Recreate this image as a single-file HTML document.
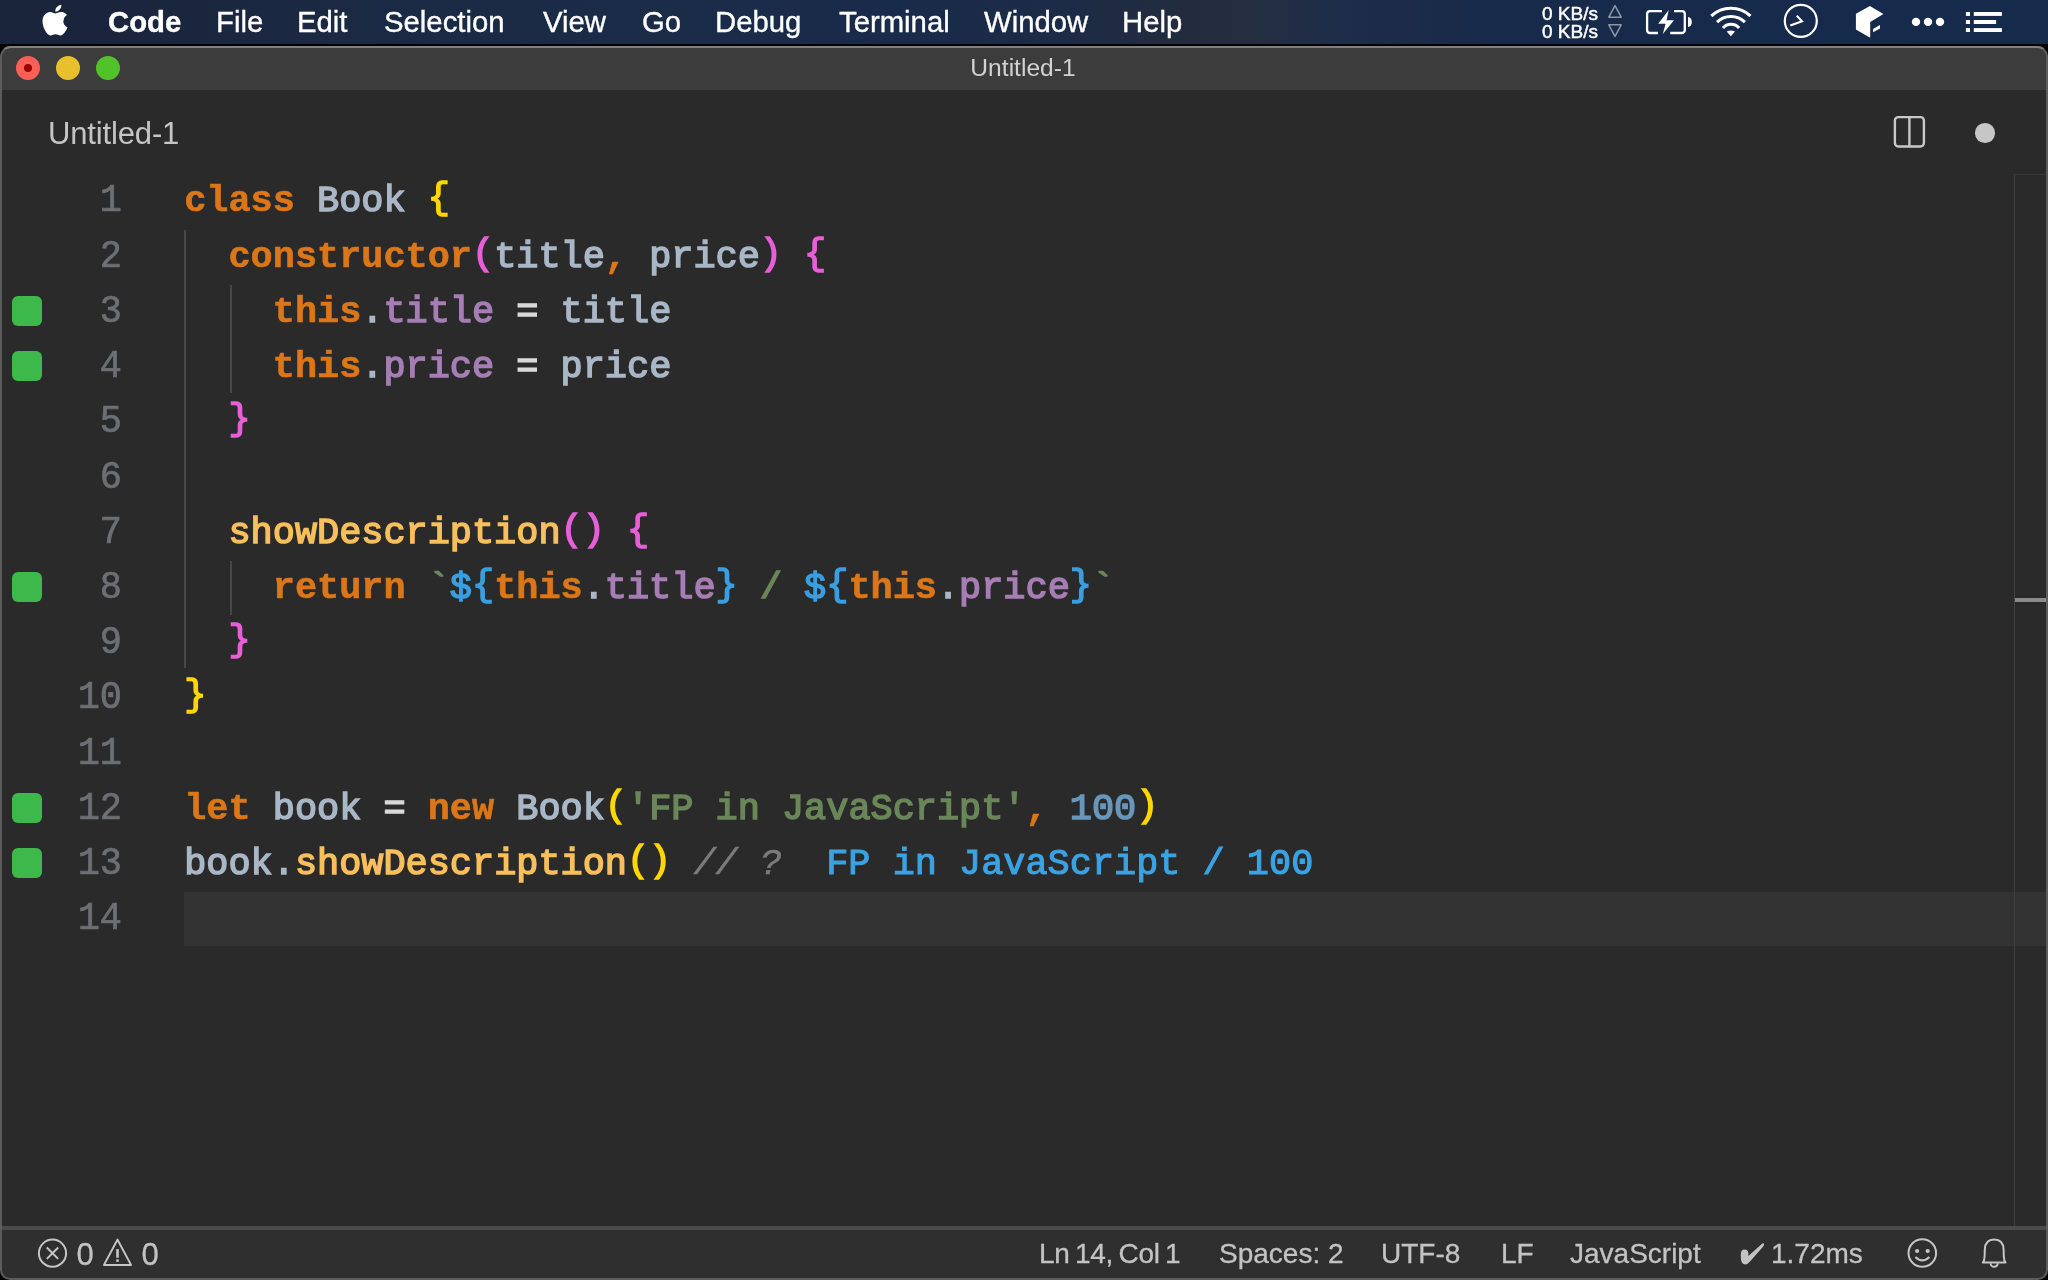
<!DOCTYPE html>
<html><head><meta charset="utf-8">
<style>
*{margin:0;padding:0;box-sizing:border-box}
html,body{width:2048px;height:1280px;overflow:hidden;background:#000}
body{position:relative;font-family:"Liberation Sans",sans-serif}
.abs{position:absolute}
#menubar{left:0;top:0;width:2048px;height:44px;background:linear-gradient(90deg,#19243a 0%,#1a263e 8%,#1b2a44 20%,#1a2c48 32%,#192b4a 44%,#1c2b46 52%,#232c3e 58%,#252e40 61%,#1e2d48 65%,#172a4a 74%,#162a4c 100%)}
.mi{position:absolute;top:0;height:44px;line-height:44px;color:#fff;font-size:29.3px;white-space:nowrap;-webkit-text-stroke:0.35px #fff}
#win{left:0;top:46px;width:2048px;height:1234px;border-radius:11px 11px 10px 10px;background:#5c5c5c;overflow:hidden}
#titlebar{left:2px;top:2px;width:2044px;height:42px;background:#3c3c3c;border-radius:9px 9px 0 0}
#topborder{left:0;top:0;width:2048px;height:3px;background:#808080;border-radius:11px 11px 0 0}
.tl{position:absolute;width:24px;height:24px;border-radius:50%;top:8px}
#editorbg{left:2px;top:44px;width:2044px;height:1136px;background:#2a2a2a}
#statusbar{left:2px;top:1184px;width:2044px;height:48px;background:#2f2f2f;border-radius:0 0 8px 8px}
#sbborder{left:2px;top:1180px;width:2044px;height:4px;background:#4b4b4b}
.code{position:absolute;left:0;top:0;font-family:"Liberation Mono",monospace;font-size:36.9px;white-space:pre;}
.ln{position:absolute;height:55.25px;line-height:55.25px}
.num{position:absolute;left:0;width:121px;text-align:right;color:#6c6f73;font-family:"Liberation Mono",monospace;font-size:36.9px;white-space:pre}
.gs{position:absolute;left:12px;width:30px;height:30px;border-radius:6px;background:#3cb94a}
.kw{color:#db7719;font-weight:bold}
.id{color:#a9b7c6}
.y{color:#ffd700}
.p{color:#e85fd9}
.b{color:#3a9fe0}
.pr{color:#a77db5}
.fn{color:#f8bf5c}
.st{color:#6a8759}
.nm{color:#6897bb}
.op{color:#d9d9d9}
.cm{color:#7c7c7c;font-style:italic}
.qk{color:#3ba3e3}
.sb{color:#c3c3c3;font-size:28px;position:absolute;top:1230px;line-height:48px;height:48px;white-space:nowrap;-webkit-text-stroke:0.3px #c3c3c3}
</style></head><body>
<div id="menubar" class="abs" style="will-change:transform">
  <svg class="abs" style="left:42px;top:4px" width="26" height="32" viewBox="0 0 26 32"><path fill="#fff" d="M21.6 17c0-3.9 3.2-5.8 3.4-5.9-1.8-2.7-4.7-3.1-5.7-3.1-2.4-.2-4.7 1.4-6 1.4s-3.1-1.4-5.1-1.4C5.6 8.1 3.1 9.6 1.8 12c-2.7 4.7-.7 11.7 1.9 15.5 1.3 1.9 2.8 3.9 4.8 3.9 1.9-.1 2.7-1.2 5-1.2s3 1.2 5.1 1.2c2.1 0 3.4-1.9 4.7-3.8 1.5-2.2 2.1-4.3 2.1-4.4-.1 0-4.1-1.6-4.1-6.2zM17.8 5.5C18.8 4.2 19.5 2.5 19.3.8c-1.5.1-3.3 1-4.4 2.3-1 1.1-1.8 2.9-1.6 4.5 1.7.1 3.4-.9 4.5-2.1z"/></svg>
  <div class="abs" style="left:1542px;top:0;font-size:19px;-webkit-text-stroke:0.45px #fff;color:#fff;line-height:18px;white-space:nowrap">
<div class="abs" style="left:0;top:5px">0&nbsp;KB/s</div><div class="abs" style="left:0;top:23px">0&nbsp;KB/s</div></div>
<svg class="abs" style="left:1606px;top:3px" width="18" height="36" viewBox="0 0 18 36"><path d="M9 2.6L15.2 14.2H2.8z" fill="none" stroke="#8d97a5" stroke-width="1.5" stroke-linejoin="round"/><path d="M9 33.4L15.2 21.8H2.8z" fill="none" stroke="#8d97a5" stroke-width="1.5" stroke-linejoin="round"/></svg>
<svg class="abs" style="left:1640px;top:0" width="60" height="44" viewBox="0 0 60 44"><path d="M22 11.1H10.1Q7.1 11.1 7.1 14.1V30Q7.1 33 10.1 33H18M30.2 33H41.8Q44.8 33 44.8 30V14.1Q44.8 11.1 41.8 11.1H34" fill="none" stroke="#fff" stroke-width="2.3"/><path d="M48 17.1Q51.8 17.5 51.8 22Q51.8 26.5 48 26.9z" fill="#fff"/><path d="M28.7 9.9L18.2 23.8H25.6L22.8 34L34 20.3H26.6z" fill="#fff"/></svg>
<svg class="abs" style="left:1700px;top:0" width="60" height="44" viewBox="0 0 60 44"><g fill="none" stroke="#fff" stroke-width="3.1"><path d="M11.3 16A28.8 28.8 0 0 1 50.5 16"/><path d="M17 22.2A19.8 19.8 0 0 1 44.9 22.2"/><path d="M22.9 28.1A10.5 10.5 0 0 1 39.1 28.1"/></g><path d="M26.7 31.6Q30.9 29.6 35 31.6L30.9 36.2z" fill="#fff"/></svg>
<svg class="abs" style="left:1780px;top:2px" width="44" height="40" viewBox="0 0 44 40"><circle cx="20.8" cy="18.9" r="16" fill="none" stroke="#fff" stroke-width="2.2"/><path d="M16.7 13.6L22 19.3L10.3 23.6" fill="none" stroke="#fff" stroke-width="2.1"/></svg>
<svg class="abs" style="left:1780px;top:2px" width="110" height="40" viewBox="0 0 110 40"><path d="M75.9 11.7L89.9 4.1L103.4 12L90.2 20V35.7L75.9 27.5z" fill="#fff"/><path d="M93.1 26.9L100 23V26.5L93.1 30.2z" fill="#fff"/></svg>
<svg class="abs" style="left:1900px;top:0" width="110" height="44" viewBox="0 0 110 44"><circle cx="16" cy="21.9" r="4.2" fill="#fff"/><circle cx="28" cy="21.9" r="4.2" fill="#fff"/><circle cx="40" cy="21.9" r="4.2" fill="#fff"/><g fill="#fff"><rect x="65.9" y="12" width="4.1" height="3.9"/><rect x="65.9" y="20" width="4.1" height="4"/><rect x="65.9" y="28.1" width="4.1" height="3.9"/><rect x="73.8" y="12" width="28.1" height="3.9"/><rect x="73.8" y="20" width="22.3" height="4"/><rect x="73.8" y="28.1" width="28.1" height="3.9"/></g></svg>
<div class="mi" style="left:108px;font-weight:bold">Code</div>
  <div class="mi" style="left:216px">File</div>
  <div class="mi" style="left:297px">Edit</div>
  <div class="mi" style="left:384px">Selection</div>
  <div class="mi" style="left:543px">View</div>
  <div class="mi" style="left:642px">Go</div>
  <div class="mi" style="left:715px">Debug</div>
  <div class="mi" style="left:839px">Terminal</div>
  <div class="mi" style="left:984px">Window</div>
  <div class="mi" style="left:1122px">Help</div>
</div>

<div id="win" class="abs">
  <div id="topborder" class="abs"></div>
  <div id="titlebar" class="abs" style="will-change:transform">
    <div class="tl" style="left:14px;background:#fe5f57"><div style="position:absolute;left:8px;top:8px;width:8px;height:8px;border-radius:50%;background:#9a0000"></div></div>
    <div class="tl" style="left:54px;background:#e7c02c"></div>
    <div class="tl" style="left:94px;background:#52c22b"></div>
    <div class="abs" style="left:-1px;width:2044px;top:-1px;height:42px;line-height:42px;text-align:center;color:#d2d2d2;font-size:24.6px">Untitled-1</div>
  </div>
  <div id="editorbg" class="abs"></div>
  <div id="sbborder" class="abs"></div>
  <div id="statusbar" class="abs"></div>
</div>
<style>
.code,.num{position:absolute;font-family:"Liberation Mono",monospace;font-size:36.9px;white-space:pre;height:55.22px;line-height:55.22px;transform:scaleY(1.02);transform-origin:0 38.65px;-webkit-text-stroke:1.5px currentColor}
.num{left:0;width:122px;text-align:right;color:#6c6f73;-webkit-text-stroke:0.7px currentColor;transform:scaleY(1.05)}
.code .kw{-webkit-text-stroke:0.6px currentColor}
.code .cm{-webkit-text-stroke:0.5px currentColor}
.code .qk{-webkit-text-stroke:1.1px currentColor}
.bt{color:#6a8759}
.dt{color:#a9b7c6}
.br{position:relative;top:-2.8px}
</style>
<div id="editor" style="will-change:transform">
<div class="abs" style="left:48px;top:92px;height:83px;line-height:83px;color:#c5c5c5;font-size:31px;letter-spacing:-0.15px">Untitled-1</div>
<svg class="abs" style="left:1892px;top:114px" width="35" height="35" viewBox="0 0 35 35"><rect x="2.9" y="3.1" width="29" height="29.4" rx="3.4" fill="none" stroke="#c8c8c8" stroke-width="2.4"/><line x1="17.4" y1="3.5" x2="17.4" y2="32" stroke="#c8c8c8" stroke-width="2.4"/></svg>
<div class="abs" style="left:1975px;top:123px;width:19.6px;height:19.6px;border-radius:50%;background:#c6c6c6"></div>
<div class="abs" style="left:184px;top:892px;width:1862px;height:54px;background:#333333"></div>
<div class="abs" style="left:2014px;top:174px;width:1px;height:1052px;background:#404040"></div>
<div class="abs" style="left:2015px;top:174px;width:31px;height:1px;background:#393939"></div>
<div class="abs" style="left:2015px;top:598px;width:31px;height:4px;background:#8b8b89"></div>
<div class="abs" style="left:184px;top:230px;width:2px;height:438px;background:#474747"></div>
<div class="abs" style="left:230px;top:285px;width:2px;height:108px;background:#474747"></div>
<div class="abs" style="left:230px;top:561px;width:2px;height:54px;background:#474747"></div>
<div class="num" style="top:174.45px">1</div>
<div class="code" style="left:184.2px;top:174.45px"><span class="kw">class</span> <span class="id">Book</span> <span class="y"><span class="br">{</span></span></div>
<div class="num" style="top:229.67px">2</div>
<div class="code" style="left:184.2px;top:229.67px">  <span class="kw">constructor</span><span class="p"><span class="br">(</span></span><span class="id">title</span><span class="kw">,</span> <span class="id">price</span><span class="p"><span class="br">)</span></span> <span class="p"><span class="br">{</span></span></div>
<div class="num" style="top:284.89px">3</div>
<div class="gs" style="top:295.94px"></div>
<div class="code" style="left:184.2px;top:284.89px">    <span class="kw">this</span><span class="dt">.</span><span class="pr">title</span> <span class="op">=</span> <span class="id">title</span></div>
<div class="num" style="top:340.11px">4</div>
<div class="gs" style="top:351.16px"></div>
<div class="code" style="left:184.2px;top:340.11px">    <span class="kw">this</span><span class="dt">.</span><span class="pr">price</span> <span class="op">=</span> <span class="id">price</span></div>
<div class="num" style="top:395.33px">5</div>
<div class="code" style="left:184.2px;top:395.33px">  <span class="p"><span class="br">}</span></span></div>
<div class="num" style="top:450.55px">6</div>
<div class="code" style="left:184.2px;top:450.55px"></div>
<div class="num" style="top:505.77px">7</div>
<div class="code" style="left:184.2px;top:505.77px">  <span class="fn">showDescription</span><span class="p"><span class="br">(</span><span class="br">)</span></span> <span class="p"><span class="br">{</span></span></div>
<div class="num" style="top:560.99px">8</div>
<div class="gs" style="top:572.04px"></div>
<div class="code" style="left:184.2px;top:560.99px">    <span class="kw">return</span> <span class="bt">`</span><span class="b">$<span class="br">{</span></span><span class="kw">this</span><span class="dt">.</span><span class="pr">title</span><span class="b"><span class="br">}</span></span><span class="st"> / </span><span class="b">$<span class="br">{</span></span><span class="kw">this</span><span class="dt">.</span><span class="pr">price</span><span class="b"><span class="br">}</span></span><span class="bt">`</span></div>
<div class="num" style="top:616.21px">9</div>
<div class="code" style="left:184.2px;top:616.21px">  <span class="p"><span class="br">}</span></span></div>
<div class="num" style="top:671.43px">10</div>
<div class="code" style="left:184.2px;top:671.43px"><span class="y"><span class="br">}</span></span></div>
<div class="num" style="top:726.65px">11</div>
<div class="code" style="left:184.2px;top:726.65px"></div>
<div class="num" style="top:781.87px">12</div>
<div class="gs" style="top:792.92px"></div>
<div class="code" style="left:184.2px;top:781.87px"><span class="kw">let</span> <span class="id">book</span> <span class="op">=</span> <span class="kw">new</span> <span class="id">Book</span><span class="y"><span class="br">(</span></span><span class="st">'FP in JavaScript'</span><span class="kw">,</span> <span class="nm">100</span><span class="y"><span class="br">)</span></span></div>
<div class="num" style="top:837.09px">13</div>
<div class="gs" style="top:848.14px"></div>
<div class="code" style="left:184.2px;top:837.09px"><span class="id">book</span><span class="dt">.</span><span class="fn">showDescription</span><span class="y"><span class="br">(</span><span class="br">)</span></span> <span class="cm">// ?</span>  <span class="qk">FP in JavaScript / 100</span></div>
<div class="num" style="top:892.31px">14</div>
<div class="code" style="left:184.2px;top:892.31px"></div>
</div>
<div id="status" style="will-change:transform">
<svg class="abs" style="left:37px;top:1238px" width="31" height="31" viewBox="0 0 31 31"><circle cx="15.5" cy="15.2" r="13.6" fill="none" stroke="#c6c6c6" stroke-width="2"/><path d="M9.8 9.5L21.2 20.9M21.2 9.5L9.8 20.9" stroke="#c6c6c6" stroke-width="2"/></svg>
<div class="sb" style="left:76.5px;top:1231px;font-size:31px">0</div>
<svg class="abs" style="left:101px;top:1237px" width="33" height="31" viewBox="0 0 33 31"><path d="M16.5 2.6L30 27.9H3z" fill="none" stroke="#c6c6c6" stroke-width="2" stroke-linejoin="round"/><rect x="15.2" y="12.1" width="2.6" height="8.6" fill="#c6c6c6"/><rect x="15.2" y="22.4" width="2.6" height="2.4" fill="#c6c6c6"/></svg>
<div class="sb" style="left:141.5px;top:1231px;font-size:31px">0</div>
<div class="sb" style="left:1039px;letter-spacing:-0.3px;word-spacing:-2px">Ln 14, Col 1</div>
<div class="sb" style="left:1219px">Spaces: 2</div>
<div class="sb" style="left:1381px">UTF-8</div>
<div class="sb" style="left:1501px">LF</div>
<div class="sb" style="left:1570px">JavaScript</div>
<div class="sb" style="left:1771px">1.72ms</div><svg class="abs" style="left:1738px;top:1240px" width="28" height="28" viewBox="0 0 28 28"><path d="M2.8 14.5Q2.8 9.6 6.6 9.6Q10.2 9.6 10.4 13.5L10.3 15.9L23.2 4.6Q25.2 2.6 26 3.8Q26.4 5.2 25 6.8L12 21.5Q9.6 24.4 7.3 24.4Q3.3 24.4 2.9 18.5z" fill="#c3c3c3"/></svg>
<svg class="abs" style="left:1906px;top:1238px" width="32" height="32" viewBox="0 0 32 32"><circle cx="16.3" cy="15" r="13.8" fill="none" stroke="#c6c6c6" stroke-width="2"/><circle cx="11.1" cy="13" r="2.1" fill="#c6c6c6"/><circle cx="21.7" cy="13" r="2.1" fill="#c6c6c6"/><path d="M9.4 18.9Q16.3 25.7 23.4 18.9" fill="none" stroke="#c6c6c6" stroke-width="2.1"/></svg>
<svg class="abs" style="left:1980px;top:1237px" width="30" height="34" viewBox="0 0 30 34"><path d="M3 25.6H25.6Q24 23.8 23.8 19.5L23.6 12.5Q23.2 2.6 14.2 2.6Q5.2 2.6 4.8 12.5L4.6 19.5Q4.4 23.8 2.8 25.6z" fill="none" stroke="#c6c6c6" stroke-width="2" stroke-linejoin="round"/><path d="M10.6 26.2a3.6 3.6 0 0 0 7.2 0" fill="none" stroke="#c6c6c6" stroke-width="2"/></svg>
</div>
</body></html>
